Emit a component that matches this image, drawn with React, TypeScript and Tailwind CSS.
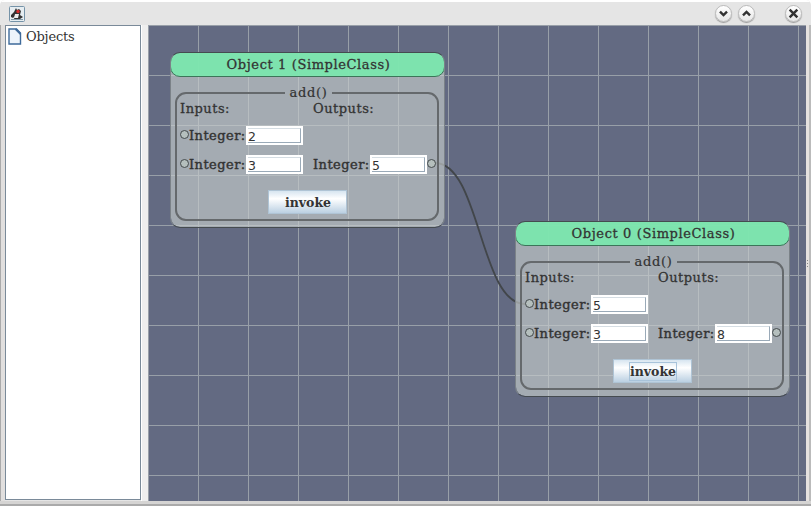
import React from "react";

type NodeProps = { title: string; place: string; inputs: [string, string]; output: string; focused?: boolean };

function Field({ value }: { value: string }) {
  return (
    <span className="block h-[19px] w-[57px] border-2 border-white bg-white">
      <span className="block h-full w-full border-b border-r border-[#9aaab8] border-t border-t-[#d5dde3] font-['DejaVu_Sans'] text-[12.5px] leading-[15px] text-[#333]">
        {value}
      </span>
    </span>
  );
}

function Port() {
  return <span className="mt-[4px] block h-[9px] w-[9px] shrink-0 rounded-full border border-[#444a4c] bg-[#b5bfbd]" />;
}

function Label({ children }: { children: React.ReactNode }) {
  return <span className="block w-[57px] whitespace-nowrap pt-px text-[13px] leading-[18px] tracking-[0.45px] [-webkit-text-stroke:0.4px_#333]">{children}</span>;
}

function ObjectNode({ title, place, inputs, output, focused }: NodeProps) {
  return (
    <section className={`absolute h-[176px] w-[275px] overflow-hidden rounded-[10px] border border-[#454b50] border-x-[#7b8288] bg-[#c7cecc]/65 bg-clip-padding ${place}`}>
      <header className="-mx-px -mt-px flex h-[25px] items-center justify-center rounded-[10px] border border-[#3c7559] bg-[#7be6ae]/95 pl-[2px] text-[13px] tracking-[0.6px] [-webkit-text-stroke:0.3px_#333]">
        {title}
      </header>
      <fieldset className="ml-[4px] mt-[7px] h-[137px] w-[264px] min-w-0 rounded-[11px] border-2 border-[#65696c] pl-[3px]">
        <legend className="mx-auto h-[17px] px-[5px] text-[13px] leading-[17px] tracking-[0.65px] [-webkit-text-stroke:0.2px_#333]">add()</legend>
        <div className="-mt-[1px] grid h-[17px] grid-cols-[133px_1fr] text-[13px] leading-[17px] tracking-[0.5px] [-webkit-text-stroke:0.3px_#333]">
          <span>Inputs:</span>
          <span>Outputs:</span>
        </div>
        <div className="mt-[9px] flex h-[19px]">
          <Port /><Label>Integer:</Label><Field value={inputs[0]} />
        </div>
        <div className="mt-[10px] flex h-[19px]">
          <Port /><Label>Integer:</Label><Field value={inputs[1]} />
          <span className="w-[10px]" /><Label>Integer:</Label><Field value={output} /><Port />
        </div>
        <button className="ml-[88px] mt-[16px] flex h-[24px] w-[79px] items-center justify-center border border-[#afc4d5] bg-gradient-to-b from-[#d7e5f0] via-white via-35% to-[#bbd0e2] pl-px text-[12.5px] font-bold leading-[18px]">
          <span className={focused ? "h-[19px] border border-[#a8c3da]" : "h-[19px] border border-transparent"}>invoke</span>
        </button>
      </fieldset>
    </section>
  );
}

function WindowButton({ path }: { path: string }) {
  return (
    <span className="flex h-[17px] w-[17px] items-center justify-center rounded-full border border-[#bbb] bg-gradient-to-b from-white to-[#e8e8e8] shadow-[0_1px_1px_#999]">
      <svg className="shrink-0" width="11" height="11" viewBox="0 0 10 10" fill="none" stroke="#333" strokeWidth="2.2"><path d={path} /></svg>
    </span>
  );
}

export default function App() {
  return (
    <main className="flex h-[506px] w-[811px] flex-col overflow-hidden rounded-t-[5px] border-b-2 border-[#aaa] bg-[#e5e5e5] font-['DejaVu_Serif',serif] text-[#333]">
      <div className="flex h-[25px] shrink-0 items-center border-t-2 border-white pl-[9px] pr-[9px]">
        <svg width="16" height="16" viewBox="0 0 16 16">
          <rect x=".5" y=".5" width="15" height="15" rx="1" fill="#e6edf1" stroke="#7593a8" />
          <path d="M7 2 5 6 2 9v2l2 1 2-2-1 3h6l3-2-3-2 1-4-2-2-2 1z" fill="#333" />
          <path d="M6 8h4l-1 4H5z" fill="#eee" /><circle cx="9" cy="5.5" r="1.7" fill="#d32d2d" />
          <path d="M2 13.5h12" stroke="#8299a6" />
        </svg>
        <div className="ml-auto flex items-center">
          <WindowButton path="M1.8 3.4 5 6.5 8.2 3.4" />
          <span className="w-[6px]" />
          <WindowButton path="M1.8 6.6 5 3.5 8.2 6.6" />
          <span className="w-[30px]" />
          <WindowButton path="m1.5 1.5 7 7m0-7-7 7" />
        </div>
      </div>
      <div className="flex h-[476px] shrink-0">
        <div className="w-[5px] border-l border-[#aaa] bg-[#e1dfde]" />
        <aside className="h-[475px] w-[136px] border border-[#7a8a99] bg-white">
          <div className="flex items-center pl-[2px] pt-[2px]">
            <svg width="14" height="17" viewBox="0 0 14 17"><path d="M1 1h7.5L12.5 5v11H1z" fill="#edf4fb" stroke="#3e6a9a" strokeWidth="1.4" /><path d="M7.5 1 12.5 6" fill="none" stroke="#3e6a9a" strokeWidth="1.8" /></svg>
            <span className="ml-1 text-[13px] leading-[17px] tracking-[-0.2px]">Objects</span>
          </div>
        </aside>
        <div className="w-[7px] border-l border-white bg-[#eee]" />
        <div className="relative h-[476px] w-[658px] overflow-hidden bg-[#636a82] bg-[linear-gradient(to_right,#989fa8_1px,transparent_1px),linear-gradient(to_bottom,#989fa8_1px,transparent_1px)] bg-[size:50px_50px]">
          <svg className="absolute inset-0" width="658" height="476" fill="none">
            <path d="M287 138C332 138 332 279 377 279" stroke="#42464a" strokeWidth="1.8" />
          </svg>
          <ObjectNode title="Object 1 (SimpleClass)" place="left-[22px] top-[27px]" inputs={["2", "3"]} output="5" />
          <ObjectNode title="Object 0 (SimpleClass)" place="left-[367px] top-[196px]" inputs={["5", "3"]} output="8" focused />
        </div>
        <div className="flex w-[5px] flex-col items-center justify-center gap-[2px] border-r-2 border-[#bbb] bg-[#e5e1df]">
          <i className="h-px w-px bg-[#888]" /><i className="h-px w-px bg-[#888]" /><i className="h-px w-px bg-[#888]" />
        </div>
      </div>
      <div className="h-[3px] bg-[#d5d4d3]" />
    </main>
  );
}
